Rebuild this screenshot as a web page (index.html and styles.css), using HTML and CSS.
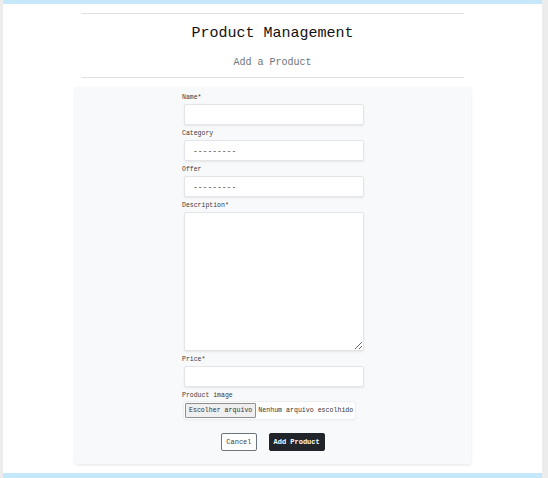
FILE: index.html
```html
<!DOCTYPE html>
<html>
<head>
<meta charset="utf-8">
<link rel="stylesheet" href="styles.css">
</head>
<body>
<div class="frame">
  <div class="header">
    <hr class="rule">
    <h1 class="title">Product Management</h1>
    <h2 class="subtitle">Add a Product</h2>
    <hr class="rule">
  </div>
  <div class="card">
    <form class="form">
      <div class="group">
        <label class="label">Name*</label>
        <input class="field" type="text">
      </div>
      <div class="group">
        <label class="label">Category</label>
        <div class="field select">---------</div>
      </div>
      <div class="group">
        <label class="label">Offer</label>
        <div class="field select">---------</div>
      </div>
      <div class="group">
        <label class="label">Description*</label>
        <textarea class="field area"></textarea>
      </div>
      <div class="group">
        <label class="label">Price*</label>
        <input class="field" type="text">
      </div>
      <div class="group">
        <label class="label">Product image</label>
        <div class="file">
          <span class="file-btn">Escolher arquivo</span>
          <span class="file-text">Nenhum arquivo escolhido</span>
        </div>
      </div>
      <div class="actions">
        <button type="button" class="btn btn-cancel">Cancel</button>
        <button type="button" class="btn btn-add">Add Product</button>
      </div>
    </form>
  </div>
</div>
</body>
</html>
```
FILE: styles.css
```css
html, body {
  margin: 0;
  padding: 0;
}
body {
  background: #ececec;
  font-family: "Liberation Mono", "DejaVu Sans Mono", monospace;
  color: #212529;
}
.frame {
  box-sizing: border-box;
  margin-left: 3px;
  width: 539px;
  height: 478px;
  background: #ffffff;
  border-top: 4px solid #c5e9fb;
  border-bottom: 5px solid #c5e9fb;
  overflow: hidden;
}
.header {
  width: 383px;
  margin: 0 auto;
  padding-top: 9px;
}
.rule {
  margin: 0;
  border: 0;
  border-top: 1px solid #dfe1e3;
}
.title {
  margin: 10px 0 0;
  font-size: 15px;
  line-height: 20px;
  font-weight: normal;
  text-align: center;
  color: #111;
}
.subtitle {
  margin: 12px 0 7px;
  font-size: 10px;
  line-height: 14px;
  font-weight: normal;
  text-align: center;
  color: #6c757d;
}
.card {
  box-sizing: border-box;
  width: 396px;
  margin: 9px auto 0;
  background: #f8f9fa;
  box-shadow: 0 1px 3px rgba(0, 0, 0, 0.1);
  border-radius: 2px;
  padding: 6px 0 13px;
}
.form {
  width: 182px;
  margin: 0 auto;
  padding-left: 1px;
}
.group {
  display: flex;
  flex-direction: column;
  margin-bottom: 4.5px;
}
.label {
  font-size: 6.5px;
  line-height: 9px;
  color: #3a3a3a;
  margin-bottom: 1.5px;
}
.field {
  box-sizing: border-box;
  margin-left: 2px;
  width: 180px;
  height: 21px;
  background: #fff;
  border: 1px solid #e3e5e8;
  border-radius: 2px;
  box-shadow: 0 1px 2px rgba(0, 0, 0, 0.08);
  font-family: inherit;
  padding: 0 8px;
  outline: none;
}
.select {
  font-size: 8px;
  line-height: 19px;
  color: #212529;
}
.area {
  height: 139px;
  resize: vertical;
  display: block;
}
.file {
  box-sizing: border-box;
  margin-left: 2px;
  width: 171px;
  height: 17px;
  background: #fff;
  border-radius: 2px;
  box-shadow: 0 0 0 1px #eceef0, 0 1px 2px rgba(0, 0, 0, 0.08);
  display: flex;
  align-items: center;
  padding: 1px;
  font-size: 6.6px;
  white-space: nowrap;
}
.file-btn {
  box-sizing: border-box;
  height: 15px;
  line-height: 13px;
  padding: 0 3px;
  background: #efefef;
  border: 1px solid #8f8f8f;
  border-radius: 1px;
  color: #333;
}
.file-text {
  margin-left: 2px;
  color: #333;
}
.actions {
  display: flex;
  justify-content: center;
  gap: 12px;
  margin-top: 14px;
}
.btn {
  box-sizing: border-box;
  height: 18px;
  font-family: inherit;
  font-size: 7px;
  border-radius: 2px;
  padding: 0 4px;
  cursor: pointer;
}
.btn-cancel {
  background: #fff;
  border: 1px solid #6c757d;
  color: #444;
}
.btn-add {
  background: #212529;
  border: 1px solid #212529;
  color: #fff;
  font-weight: bold;
}
```
